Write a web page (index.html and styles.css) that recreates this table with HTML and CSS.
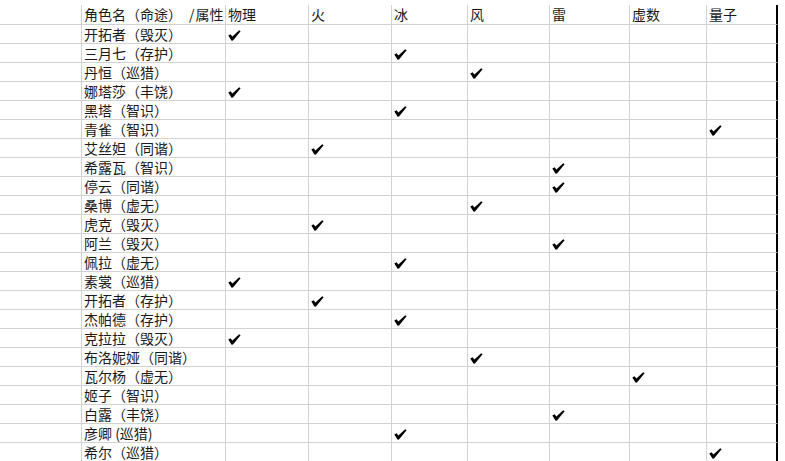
FILE: index.html
```html
<!DOCTYPE html>
<html lang="zh-CN">
<head>
<meta charset="utf-8">
<title>角色属性表</title>
<link rel="stylesheet" href="styles.css">
</head>
<body>
<svg width="0" height="0" class="defs">
  <defs>
    <symbol id="chk" viewBox="0 0 13 11">
      <path d="M0.3 5.6 L2.6 4.2 L4.4 6.6 L11.2 0.2 L12.6 1.2 L5.0 10.6 L3.6 10.8 Z"/>
    </symbol>
  </defs>
</svg>
<div class="sheet">
  <div class="c a"></div><div class="c n">角色名（命途）<span class="sl">/</span>属性</div><div class="c">物理</div><div class="c">火</div><div class="c">冰</div><div class="c">风</div><div class="c">雷</div><div class="c">虚数</div><div class="c last">量子</div>

  <div class="c a"></div><div class="c n">开拓者（毁灭）</div><div class="c"><svg class="ck"><use href="#chk"/></svg></div><div class="c"></div><div class="c"></div><div class="c"></div><div class="c"></div><div class="c"></div><div class="c last"></div>
  <div class="c a"></div><div class="c n">三月七（存护）</div><div class="c"></div><div class="c"></div><div class="c"><svg class="ck"><use href="#chk"/></svg></div><div class="c"></div><div class="c"></div><div class="c"></div><div class="c last"></div>
  <div class="c a"></div><div class="c n">丹恒（巡猎）</div><div class="c"></div><div class="c"></div><div class="c"></div><div class="c"><svg class="ck"><use href="#chk"/></svg></div><div class="c"></div><div class="c"></div><div class="c last"></div>
  <div class="c a"></div><div class="c n">娜塔莎（丰饶）</div><div class="c"><svg class="ck"><use href="#chk"/></svg></div><div class="c"></div><div class="c"></div><div class="c"></div><div class="c"></div><div class="c"></div><div class="c last"></div>
  <div class="c a"></div><div class="c n">黑塔（智识）</div><div class="c"></div><div class="c"></div><div class="c"><svg class="ck"><use href="#chk"/></svg></div><div class="c"></div><div class="c"></div><div class="c"></div><div class="c last"></div>
  <div class="c a"></div><div class="c n">青雀（智识）</div><div class="c"></div><div class="c"></div><div class="c"></div><div class="c"></div><div class="c"></div><div class="c"></div><div class="c last"><svg class="ck"><use href="#chk"/></svg></div>
  <div class="c a"></div><div class="c n">艾丝妲（同谐）</div><div class="c"></div><div class="c"><svg class="ck"><use href="#chk"/></svg></div><div class="c"></div><div class="c"></div><div class="c"></div><div class="c"></div><div class="c last"></div>
  <div class="c a"></div><div class="c n">希露瓦（智识）</div><div class="c"></div><div class="c"></div><div class="c"></div><div class="c"></div><div class="c"><svg class="ck"><use href="#chk"/></svg></div><div class="c"></div><div class="c last"></div>
  <div class="c a"></div><div class="c n">停云（同谐）</div><div class="c"></div><div class="c"></div><div class="c"></div><div class="c"></div><div class="c"><svg class="ck"><use href="#chk"/></svg></div><div class="c"></div><div class="c last"></div>
  <div class="c a"></div><div class="c n">桑博（虚无）</div><div class="c"></div><div class="c"></div><div class="c"></div><div class="c"><svg class="ck"><use href="#chk"/></svg></div><div class="c"></div><div class="c"></div><div class="c last"></div>
  <div class="c a"></div><div class="c n">虎克（毁灭）</div><div class="c"></div><div class="c"><svg class="ck"><use href="#chk"/></svg></div><div class="c"></div><div class="c"></div><div class="c"></div><div class="c"></div><div class="c last"></div>
  <div class="c a"></div><div class="c n">阿兰（毁灭）</div><div class="c"></div><div class="c"></div><div class="c"></div><div class="c"></div><div class="c"><svg class="ck"><use href="#chk"/></svg></div><div class="c"></div><div class="c last"></div>
  <div class="c a"></div><div class="c n">佩拉（虚无）</div><div class="c"></div><div class="c"></div><div class="c"><svg class="ck"><use href="#chk"/></svg></div><div class="c"></div><div class="c"></div><div class="c"></div><div class="c last"></div>
  <div class="c a"></div><div class="c n">素裳（巡猎）</div><div class="c"><svg class="ck"><use href="#chk"/></svg></div><div class="c"></div><div class="c"></div><div class="c"></div><div class="c"></div><div class="c"></div><div class="c last"></div>
  <div class="c a"></div><div class="c n">开拓者（存护）</div><div class="c"></div><div class="c"><svg class="ck"><use href="#chk"/></svg></div><div class="c"></div><div class="c"></div><div class="c"></div><div class="c"></div><div class="c last"></div>
  <div class="c a"></div><div class="c n">杰帕德（存护）</div><div class="c"></div><div class="c"></div><div class="c"><svg class="ck"><use href="#chk"/></svg></div><div class="c"></div><div class="c"></div><div class="c"></div><div class="c last"></div>
  <div class="c a"></div><div class="c n">克拉拉（毁灭）</div><div class="c"><svg class="ck"><use href="#chk"/></svg></div><div class="c"></div><div class="c"></div><div class="c"></div><div class="c"></div><div class="c"></div><div class="c last"></div>
  <div class="c a"></div><div class="c n">布洛妮娅（同谐）</div><div class="c"></div><div class="c"></div><div class="c"></div><div class="c"><svg class="ck"><use href="#chk"/></svg></div><div class="c"></div><div class="c"></div><div class="c last"></div>
  <div class="c a"></div><div class="c n">瓦尔杨（虚无）</div><div class="c"></div><div class="c"></div><div class="c"></div><div class="c"></div><div class="c"></div><div class="c"><svg class="ck"><use href="#chk"/></svg></div><div class="c last"></div>
  <div class="c a"></div><div class="c n">姬子（智识）</div><div class="c"></div><div class="c"></div><div class="c"></div><div class="c"></div><div class="c"></div><div class="c"></div><div class="c last"></div>
  <div class="c a"></div><div class="c n">白露（丰饶）</div><div class="c"></div><div class="c"></div><div class="c"></div><div class="c"></div><div class="c"><svg class="ck"><use href="#chk"/></svg></div><div class="c"></div><div class="c last"></div>
  <div class="c a"></div><div class="c n">彦卿 (巡猎)</div><div class="c"></div><div class="c"></div><div class="c"><svg class="ck"><use href="#chk"/></svg></div><div class="c"></div><div class="c"></div><div class="c"></div><div class="c last"></div>
  <div class="c a"></div><div class="c n">希尔（巡猎）</div><div class="c"></div><div class="c"></div><div class="c"></div><div class="c"></div><div class="c"></div><div class="c"></div><div class="c last"><svg class="ck"><use href="#chk"/></svg></div>
</div>
</body>
</html>
```
FILE: styles.css
```css
html, body {
  margin: 0;
  padding: 0;
  background: #ffffff;
}
body {
  font-family: "Noto Sans CJK SC", "Noto Sans", sans-serif;
  font-size: 14px;
  color: #1a1a1a;
  overflow: hidden;
}
.defs {
  position: absolute;
  width: 0;
  height: 0;
}
.sheet {
  margin-top: 5px;
  display: grid;
  grid-template-columns: 82px 144px 83px 83px 76px 82px 80px 77px 71px;
  grid-template-rows: 20px repeat(23, 19px);
  width: 778px;
}
.c {
  box-sizing: border-box;
  border-right: 1px solid #d2d2d2;
  border-bottom: 1px solid #d2d2d2;
  padding-left: 2px;
  line-height: 18px;
  white-space: nowrap;
}
.c.last {
  border-right: 2px solid #000000;
}
.n {
  padding-left: 2px;
}
.sl {
  margin-left: 7px;
  margin-right: 1px;
}
.ck {
  display: block;
  width: 13px;
  height: 11px;
  margin-top: 5px;
  fill: #000000;
}
```
